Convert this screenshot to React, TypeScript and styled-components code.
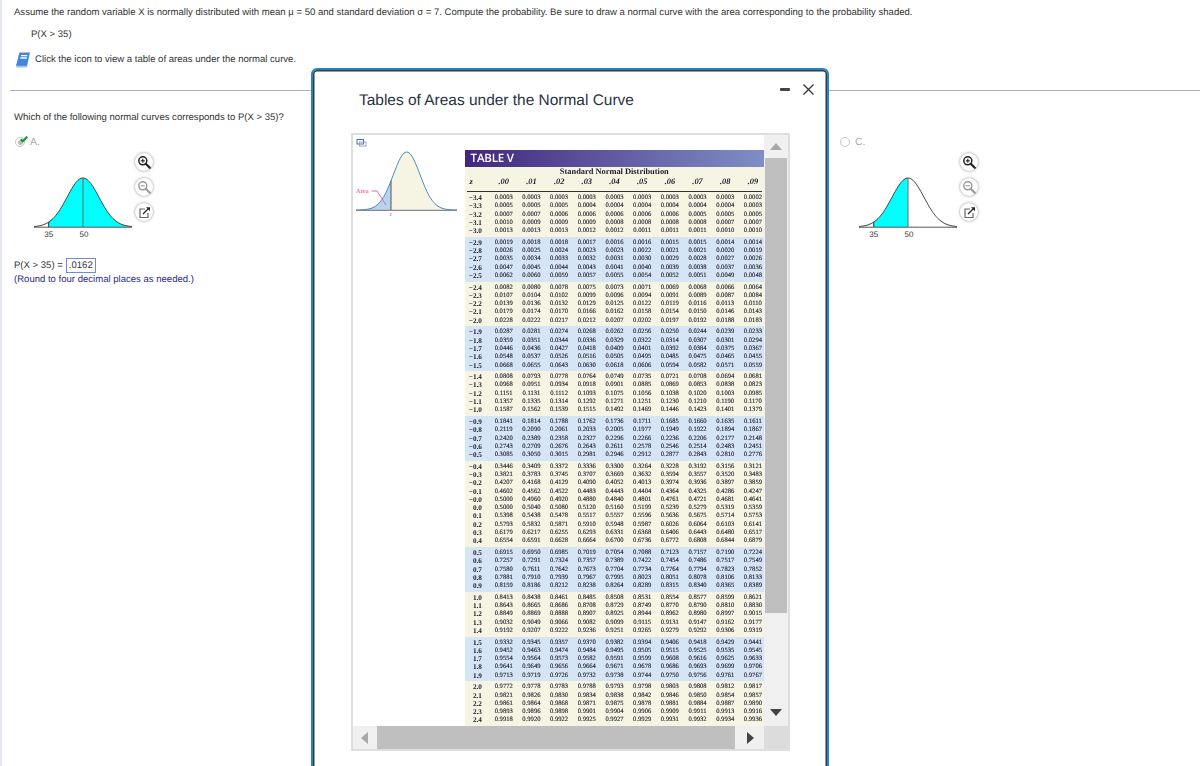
import React from "react";
import styled, { createGlobalStyle } from "styled-components";

const GlobalStyle = createGlobalStyle`
  html, body { margin: 0; padding: 0; background: #fff; }
  body { font-family: "Liberation Sans", Arial, sans-serif; text-rendering: geometricPrecision; }
`;

const raw = `-3.4|0003 0003 0003 0003 0003 0003 0003 0003 0003 0002
-3.3|0005 0005 0005 0004 0004 0004 0004 0004 0004 0003
-3.2|0007 0007 0006 0006 0006 0006 0006 0005 0005 0005
-3.1|0010 0009 0009 0009 0008 0008 0008 0008 0007 0007
-3.0|0013 0013 0013 0012 0012 0011 0011 0011 0010 0010
-2.9|0019 0018 0018 0017 0016 0016 0015 0015 0014 0014
-2.8|0026 0025 0024 0023 0023 0022 0021 0021 0020 0019
-2.7|0035 0034 0033 0032 0031 0030 0029 0028 0027 0026
-2.6|0047 0045 0044 0043 0041 0040 0039 0038 0037 0036
-2.5|0062 0060 0059 0057 0055 0054 0052 0051 0049 0048
-2.4|0082 0080 0078 0075 0073 0071 0069 0068 0066 0064
-2.3|0107 0104 0102 0099 0096 0094 0091 0089 0087 0084
-2.2|0139 0136 0132 0129 0125 0122 0119 0116 0113 0110
-2.1|0179 0174 0170 0166 0162 0158 0154 0150 0146 0143
-2.0|0228 0222 0217 0212 0207 0202 0197 0192 0188 0183
-1.9|0287 0281 0274 0268 0262 0256 0250 0244 0239 0233
-1.8|0359 0351 0344 0336 0329 0322 0314 0307 0301 0294
-1.7|0446 0436 0427 0418 0409 0401 0392 0384 0375 0367
-1.6|0548 0537 0526 0516 0505 0495 0485 0475 0465 0455
-1.5|0668 0655 0643 0630 0618 0606 0594 0582 0571 0559
-1.4|0808 0793 0778 0764 0749 0735 0721 0708 0694 0681
-1.3|0968 0951 0934 0918 0901 0885 0869 0853 0838 0823
-1.2|1151 1131 1112 1093 1075 1056 1038 1020 1003 0985
-1.1|1357 1335 1314 1292 1271 1251 1230 1210 1190 1170
-1.0|1587 1562 1539 1515 1492 1469 1446 1423 1401 1379
-0.9|1841 1814 1788 1762 1736 1711 1685 1660 1635 1611
-0.8|2119 2090 2061 2033 2005 1977 1949 1922 1894 1867
-0.7|2420 2389 2358 2327 2296 2266 2236 2206 2177 2148
-0.6|2743 2709 2676 2643 2611 2578 2546 2514 2483 2451
-0.5|3085 3050 3015 2981 2946 2912 2877 2843 2810 2776
-0.4|3446 3409 3372 3336 3300 3264 3228 3192 3156 3121
-0.3|3821 3783 3745 3707 3669 3632 3594 3557 3520 3483
-0.2|4207 4168 4129 4090 4052 4013 3974 3936 3897 3859
-0.1|4602 4562 4522 4483 4443 4404 4364 4325 4286 4247
-0.0|5000 4960 4920 4880 4840 4801 4761 4721 4681 4641
0.0|5000 5040 5080 5120 5160 5199 5239 5279 5319 5359
0.1|5398 5438 5478 5517 5557 5596 5636 5675 5714 5753
0.2|5793 5832 5871 5910 5948 5987 6026 6064 6103 6141
0.3|6179 6217 6255 6293 6331 6368 6406 6443 6480 6517
0.4|6554 6591 6628 6664 6700 6736 6772 6808 6844 6879
0.5|6915 6950 6985 7019 7054 7088 7123 7157 7190 7224
0.6|7257 7291 7324 7357 7389 7422 7454 7486 7517 7549
0.7|7580 7611 7642 7673 7704 7734 7764 7794 7823 7852
0.8|7881 7910 7939 7967 7995 8023 8051 8078 8106 8133
0.9|8159 8186 8212 8238 8264 8289 8315 8340 8365 8389
1.0|8413 8438 8461 8485 8508 8531 8554 8577 8599 8621
1.1|8643 8665 8686 8708 8729 8749 8770 8790 8810 8830
1.2|8849 8869 8888 8907 8925 8944 8962 8980 8997 9015
1.3|9032 9049 9066 9082 9099 9115 9131 9147 9162 9177
1.4|9192 9207 9222 9236 9251 9265 9279 9292 9306 9319
1.5|9332 9345 9357 9370 9382 9394 9406 9418 9429 9441
1.6|9452 9463 9474 9484 9495 9505 9515 9525 9535 9545
1.7|9554 9564 9573 9582 9591 9599 9608 9616 9625 9633
1.8|9641 9649 9656 9664 9671 9678 9686 9693 9699 9706
1.9|9713 9719 9726 9732 9738 9744 9750 9756 9761 9767
2.0|9772 9778 9783 9788 9793 9798 9803 9808 9812 9817
2.1|9821 9826 9830 9834 9838 9842 9846 9850 9854 9857
2.2|9861 9864 9868 9871 9875 9878 9881 9884 9887 9890
2.3|9893 9896 9898 9901 9904 9906 9909 9911 9913 9916
2.4|9918 9920 9922 9925 9927 9929 9931 9932 9934 9936`;

const rows = raw.split("\n").map((l) => {
  const [z, v] = l.split("|");
  return { z: z.replace("-", "\u2212"), vals: v.split(" ").map((n) => "0." + n) };
});
const bandSizes = [5, 5, 5, 5, 5, 5, 10, 5, 5, 5, 5];
const bands: (typeof rows)[] = [];
{
  let i = 0;
  for (const n of bandSizes) {
    bands.push(rows.slice(i, i + n));
    i += n;
  }
}
const heads = [".00", ".01", ".02", ".03", ".04", ".05", ".06", ".07", ".08", ".09"];

const Page = styled.div`
  position: relative;
  width: 1200px;
  height: 766px;
  overflow: hidden;
  box-sizing: border-box;
  border-left: 2px solid #e6e6ee;
  color: #333;
  font-size: 9.56px;
  line-height: 14px;
`;
const Question = styled.div`
  padding: 6px 0 0 12px;
`;
const Indented = styled.div`
  margin: 8px 0 0 17px;
`;
const IconLine = styled.div`
  display: flex;
  align-items: center;
  gap: 4px;
  margin: 10px 0 0 1px;
  height: 16px;
`;
const Rule = styled.hr`
  margin: 22px 0 0 8px;
  border: 0;
  height: 1px;
  background: #a9adc6;
`;
const Prompt = styled.div`
  margin: 20px 0 0 12px;
`;
const Options = styled.div`
  display: grid;
  grid-template-columns: 826px 1fr;
  margin: 11px 0 0 12px;
`;
const OptionLabel = styled.div<{ $pad: number }>`
  display: flex;
  align-items: center;
  gap: 5px;
  height: 12px;
  padding-left: ${(p) => p.$pad}px;
  color: #aaa;
  font-size: 10.5px;
  position: relative;
`;
const Radio = styled.span`
  width: 8px;
  height: 8px;
  border: 1px solid #c8c8c8;
  border-radius: 50%;
  display: flex;
  align-items: center;
  justify-content: center;
  background: #fff;
`;
const RadioDot = styled.span`
  width: 5px;
  height: 5px;
  border-radius: 50%;
  background: #bbb;
`;
const Check = styled.svg`
  position: absolute;
  left: 6px;
  top: 0;
`;
const ChartRow = styled.div<{ $indent: number }>`
  display: flex;
  align-items: flex-start;
  margin: 17px 0 0 ${(p) => p.$indent}px;
`;
const ZoomColumn = styled.div`
  display: flex;
  flex-direction: column;
  gap: 7px;
  margin: -12px 0 0 2px;
`;
const RoundButton = styled.div`
  width: 18px;
  height: 18px;
  border-radius: 50%;
  background: #fff;
  box-shadow: 0 0 3px rgba(0, 0, 0, 0.45);
  display: flex;
  align-items: center;
  justify-content: center;
`;
const AnswerLine = styled.div`
  display: flex;
  align-items: center;
  gap: 3px;
  margin-top: 17px;
  height: 15px;
`;
const AnswerBox = styled.span`
  border: 1px solid #6d8cd8;
  padding: 0 2px;
  height: 13px;
  line-height: 13px;
  color: #333;
`;
const Hint = styled.div`
  color: #2e2a86;
`;

const Modal = styled.div`
  position: absolute;
  left: 309px;
  top: 68px;
  width: 518px;
  height: 740px;
  box-sizing: border-box;
  background: #fff;
  border: 2px solid #1f86c4;
  border-radius: 6px 6px 0 0;
  box-shadow: inset 0 0 0 1.5px #3a3a3a;
`;
const ModalHead = styled.div`
  display: flex;
  align-items: center;
  justify-content: space-between;
  height: 62px;
  padding: 0 12px 6px 46px;
  box-sizing: border-box;
`;
const ModalTitle = styled.div`
  font-size: 15.46px;
  color: #2a3242;
  padding-top: 6px;
`;
const ModalActions = styled.div`
  display: flex;
  align-items: center;
  gap: 12px;
  margin-top: -18px;
`;
const Minimize = styled.span`
  width: 10px;
  height: 3px;
  background: #444;
  border-radius: 1px;
`;
const Panel = styled.div`
  margin: 1px 0 0 38px;
  width: 439px;
  height: 618px;
  box-sizing: border-box;
  border: 2px solid #dedede;
  display: grid;
  grid-template-columns: 411px 24px;
  grid-template-rows: 591px 23px;
`;
const Viewport = styled.div`
  overflow: hidden;
  display: flex;
  align-items: flex-start;
  background: #fff;
`;
const Figure = styled.div`
  width: 111.6px;
  flex: none;
`;
const TableBox = styled.div`
  width: 299.4px;
  flex: none;
  margin-top: 15px;
  font-family: "Liberation Serif", "Times New Roman", serif;
  background: #f6f4e3;
  color: #1c1c2a;
  filter: blur(0.25px);
`;
const TableBanner = styled.div`
  height: 17px;
  line-height: 18px;
  padding-left: 6px;
  background: linear-gradient(90deg, #43267f, #7f8ec6);
  color: #fff;
  font-family: "Open Sans", "Liberation Sans", sans-serif;
  font-size: 11.5px;
  font-weight: 600;
  letter-spacing: -0.2px;
`;
const TableCaption = styled.div`
  font-size: 8.4px;
  font-weight: bold;
  text-align: center;
  height: 10px;
  line-height: 10px;
`;
const HeadRow = styled.div`
  display: grid;
  grid-template-columns: 23.3px repeat(10, 27.7px);
  height: 15px;
  box-sizing: border-box;
  margin: 0 2px;
  border-bottom: 1px solid #333;
  font-size: 8.4px;
  font-weight: bold;
  font-style: italic;
  line-height: 10px;
`;
const HeadCell = styled.span`
  text-align: center;
`;
const ZHead = styled.span`
  padding-left: 3px;
`;
const Band = styled.div<{ $blue: boolean }>`
  background: ${(p) => (p.$blue ? "#d6e5f6" : "#f6f4e3")};
  padding: 2px 0 1.3px;
`;
const DataRow = styled.div`
  display: grid;
  grid-template-columns: 25.3px repeat(10, 27.7px);
  height: 8.3px;
  line-height: 8.3px;
  font-size: 6.6px;
`;
const ZCell = styled.span`
  font-weight: bold;
  font-size: 7.2px;
  text-align: right;
  padding-right: 8px;
`;
const ValueCell = styled.span`
  text-align: center;
  -webkit-text-stroke: 0.12px #1c1c2a;
`;
const VScroll = styled.div`
  display: flex;
  flex-direction: column;
  background: #f0f0f0;
`;
const ScrollEnd = styled.div`
  height: 23px;
  flex: none;
  display: flex;
  align-items: center;
  justify-content: center;
`;
const VThumb = styled.div`
  height: 455px;
  flex: none;
  margin: 0 1px;
  background: #bfbfbf;
`;
const VRest = styled.div`
  flex: 1;
  display: flex;
  align-items: flex-end;
  justify-content: center;
  padding-bottom: 8px;
`;
const HScroll = styled.div`
  display: flex;
  background: #f0f0f0;
`;
const HEnd = styled.div<{ $w: number }>`
  width: ${(p) => p.$w}px;
  flex: none;
  display: flex;
  align-items: center;
  justify-content: center;
`;
const HThumb = styled.div`
  flex: 1;
  background: #bfbfbf;
`;
const Corner = styled.div`
  background: #dcdcdc;
`;

const BookIcon = () => (
  <svg width="16" height="16" viewBox="0 0 16 16">
    <path d="M4.2 1.2C4.4.8 4.8.6 5.2.6H15l-2.6 11.6H2.4L1 14z" fill="#3f86de" />
    <path d="M1 13.6c-.2 1 .4 1.8 1.4 1.8h9.6l.5-3.2H2.4z" fill="#9cc3ef" />
    <path d="M1.2 13.4c.2-.8.7-1.2 1.4-1.2h9.8l-.3 1.2z" fill="#2a6cc0" />
    <path d="M6 3.6h6.4M5.4 6h6.4" stroke="#fff" strokeWidth="1.3" />
  </svg>
);

const ZoomGlyph = ({ plus, color }: { plus: boolean; color: string }) => (
  <svg width="14" height="14" viewBox="0 0 14 14" fill="none" stroke={color}>
    <circle cx="5.8" cy="5.8" r="4" strokeWidth="1.5" />
    <path d="M8.8 8.8l4 4" strokeWidth="2.2" strokeLinecap="round" />
    <path d="M3.8 5.8h4" strokeWidth="1.1" />
    {plus && <path d="M5.8 3.8v4" strokeWidth="1.1" />}
  </svg>
);

const PopGlyph = () => (
  <svg width="13" height="13" viewBox="0 0 13 13" fill="none">
    <path d="M7 3H2v8.5h8V7" stroke="#666" strokeWidth="1.2" />
    <path d="M5 8l5-5" stroke="#222" strokeWidth="1.3" />
    <path d="M8 1.2h4v4z" fill="#222" />
  </svg>
);

function bell(mean: number, sd: number, base: number, amp: number, from: number, to: number) {
  const pts: string[] = [];
  for (let x = from; x <= to + 0.01; x += 1) {
    const y = base - amp * Math.exp(-0.5 * ((x - mean) / sd) ** 2);
    pts.push(`${x.toFixed(1)} ${y.toFixed(2)}`);
  }
  return pts;
}

const NormalChart = ({ fillTo }: { fillTo: number }) => {
  const line = bell(50, 16, 62, 49, 1, 99);
  const fill = bell(50, 16, 62, 49, 15.7, fillTo);
  return (
    <svg width="100" height="76" viewBox="0 0 100 76">
      <path d={`M15.7 62L${fill.join("L")}L${fillTo} 62Z`} fill="#00ffff" />
      <path d={`M${line.join("L")}`} fill="none" stroke="#333" strokeWidth="0.9" />
      <path d="M1 62.2H99" stroke="#555" strokeWidth="1" />
      <path d="M15.7 57V62" stroke="#333" strokeWidth="1" />
      <path d="M50 13V62" stroke="#666" strokeWidth="1" />
      <text x="15.7" y="72" fontSize="8" textAnchor="middle" fontFamily="Liberation Sans" fill="#333">35</text>
      <text x="51" y="72" fontSize="8" textAnchor="middle" fontFamily="Liberation Sans" fill="#333">50</text>
    </svg>
  );
};

const Tools = () => (
  <ZoomColumn>
    <RoundButton><ZoomGlyph plus color="#222" /></RoundButton>
    <RoundButton><ZoomGlyph plus={false} color="#999" /></RoundButton>
    <RoundButton><PopGlyph /></RoundButton>
  </ZoomColumn>
);

const AreaFigure = () => {
  const mean = 53.7;
  const line = bell(mean, 13.4, 75, 58, 3, 104);
  const left = bell(mean, 13.4, 75, 58, 3, 38);
  const right = bell(mean, 13.4, 75, 58, 38, 104);
  return (
    <svg width="108" height="84" viewBox="0 0 108 84">
      <g fill="none" strokeWidth="0.9">
        <rect x="4" y="4.5" width="6.5" height="4.5" stroke="#3f5fa8" />
        <rect x="6.5" y="7" width="6.5" height="4" stroke="#8aa0c8" />
      </g>
      <path d={`M3 75L${left.join("L")}L38 75Z`} fill="#b8d3ee" />
      <path d={`M38 75L${right.join("L")}L104 75Z`} fill="#f6f4e3" />
      <path d={`M${line.join("L")}`} fill="none" stroke="#4a8cc6" strokeWidth="1" />
      <path d="M38 45.7V75" stroke="#555" strokeWidth="1" />
      <path d="M3 75.3H104" stroke="#888" strokeWidth="1.2" />
      <path d="M18.7 56h5.3l9 14" fill="none" stroke="#ec3fa0" strokeWidth="0.8" />
      <text x="3" y="58" fontSize="6.5" fontFamily="Liberation Serif" fill="#ec3fa0">Area</text>
      <text x="37.7" y="81" fontSize="6" fontStyle="italic" textAnchor="middle" fontFamily="Liberation Serif" fill="#ec3fa0">z</text>
    </svg>
  );
};

const Arrow = ({ dir, color }: { dir: "up" | "down" | "left" | "right"; color: string }) => {
  const d = { up: "M0 9L6 2l6 7z", down: "M0 3l6 7 6-7z", left: "M9 0v12L2 6z", right: "M3 0v12l7-6z" }[dir];
  return (
    <svg width="12" height="12" viewBox="0 0 12 12"><path d={d} fill={color} /></svg>
  );
};

export default function App() {
  return (
    <>
      <GlobalStyle />
      <Page>
        <Question>
          Assume the random variable X is normally distributed with mean μ = 50 and standard deviation σ = 7. Compute the probability. Be sure to draw a normal curve with the area corresponding to the probability shaded.
          <Indented>P(X &gt; 35)</Indented>
          <IconLine><BookIcon /> Click the icon to view a table of areas under the normal curve.</IconLine>
        </Question>
        <Rule />
        <Prompt>Which of the following normal curves corresponds to P(X &gt; 35)?</Prompt>
        <Options>
          <div>
            <OptionLabel $pad={1}>
              <Radio><RadioDot /></Radio>
              <Check width="8" height="6.5" viewBox="0 0 12 10"><path d="M1 5l3.2 3L11 1" fill="none" stroke="#1c9a35" strokeWidth="3.4" /></Check>
              A.
            </OptionLabel>
            <ChartRow $indent={19}>
              <NormalChart fillTo={99} />
              <Tools />
            </ChartRow>
            <AnswerLine>P(X &gt; 35) = <AnswerBox>.0162</AnswerBox></AnswerLine>
            <Hint>(Round to four decimal places as needed.)</Hint>
          </div>
          <div>
            <OptionLabel $pad={0}>
              <Radio />
              C.
            </OptionLabel>
            <ChartRow $indent={18}>
              <NormalChart fillTo={50} />
              <Tools />
            </ChartRow>
          </div>
        </Options>
        <Modal>
          <ModalHead>
            <ModalTitle>Tables of Areas under the Normal Curve</ModalTitle>
            <ModalActions>
              <Minimize />
              <svg width="13" height="13" viewBox="0 0 13 13"><path d="M1.5 1.5l10 10M11.5 1.5l-10 10" stroke="#333" strokeWidth="1.3" /></svg>
            </ModalActions>
          </ModalHead>
          <Panel>
            <Viewport>
              <Figure><AreaFigure /></Figure>
              <TableBox>
                <TableBanner>TABLE V</TableBanner>
                <TableCaption>Standard Normal Distribution</TableCaption>
                <HeadRow>
                  <ZHead>z</ZHead>
                  {heads.map((h) => <HeadCell key={h}>{h}</HeadCell>)}
                </HeadRow>
                {bands.map((band, i) => (
                  <Band key={i} $blue={i % 2 === 1}>
                    {band.map((r) => (
                      <DataRow key={r.z}>
                        <ZCell>{r.z}</ZCell>
                        {r.vals.map((v, j) => <ValueCell key={j}>{v}</ValueCell>)}
                      </DataRow>
                    ))}
                  </Band>
                ))}
              </TableBox>
            </Viewport>
            <VScroll>
              <ScrollEnd><Arrow dir="up" color="#a8a8a8" /></ScrollEnd>
              <VThumb />
              <VRest><Arrow dir="down" color="#444" /></VRest>
            </VScroll>
            <HScroll>
              <HEnd $w={24}><Arrow dir="left" color="#a8a8a8" /></HEnd>
              <HThumb />
              <HEnd $w={29}><Arrow dir="right" color="#444" /></HEnd>
            </HScroll>
            <Corner />
          </Panel>
        </Modal>
      </Page>
    </>
  );
}
